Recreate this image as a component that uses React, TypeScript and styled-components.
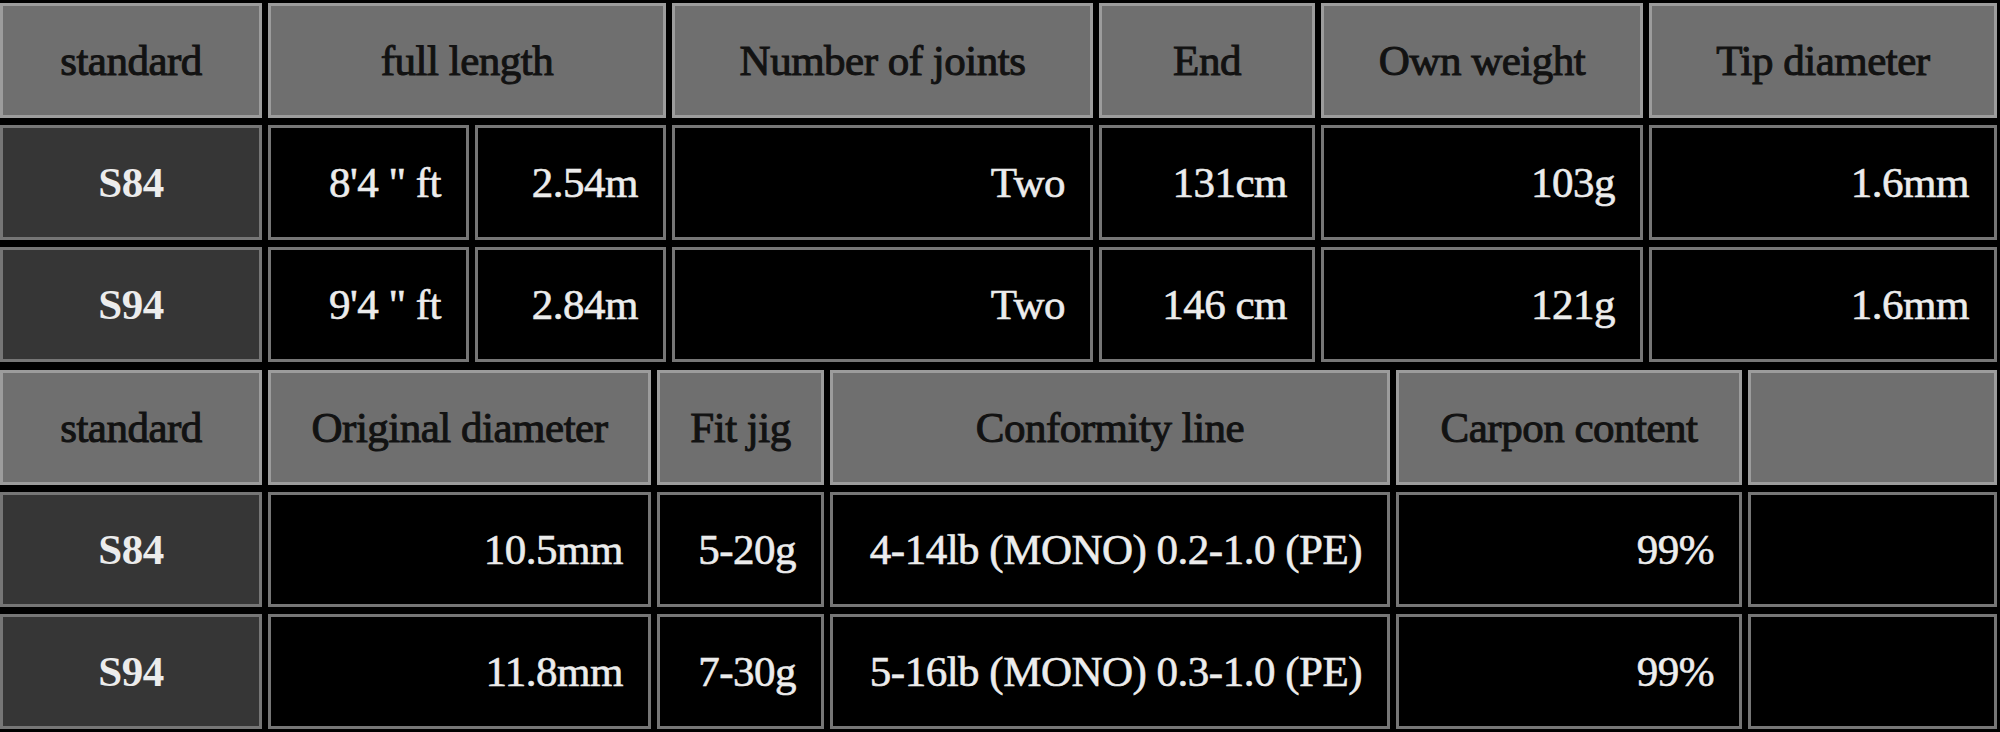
import styled, { createGlobalStyle } from "styled-components";

const GlobalStyle = createGlobalStyle`
  html, body {
    margin: 0;
    padding: 0;
    background: #000;
  }
`;

const serif = `"Liberation Serif", "Times New Roman", serif`;

const Page = styled.main`
  display: flex;
  flex-direction: column;
  gap: 8px;
  width: 2000px;
  height: 732px;
  padding-top: 3px;
  box-sizing: border-box;
  background: #000;
  overflow: hidden;
  font-family: ${serif};
`;

const SpecGrid = styled.section<{ $columns: string }>`
  display: grid;
  grid-template-columns: ${(p) => p.$columns};
  grid-auto-rows: 115px;
  column-gap: 6px;
  row-gap: 7px;
`;

type CellKind = "head" | "label" | "value";

const Cell = styled.div<{ $kind: CellKind; $span?: number }>`
  grid-column: span ${(p) => p.$span ?? 1};
  display: flex;
  align-items: center;
  justify-content: ${(p) => (p.$kind === "value" ? "flex-end" : "center")};
  box-sizing: border-box;
  padding: 0 ${(p) => (p.$kind === "value" ? "25px" : "0")} 0 0;
  border: 3px solid
    ${(p) => (p.$kind === "head" ? "#9c9c9c" : "#767676")};
  background: ${(p) =>
    p.$kind === "head" ? "#6f6f6f" : p.$kind === "label" ? "#363636" : "#000"};
  color: ${(p) => (p.$kind === "head" ? "#121212" : "#ececec")};
  font-family: ${serif};
  font-size: 43px;
  font-weight: ${(p) => (p.$kind === "label" ? 700 : 400)};
  letter-spacing: -0.5px;
  white-space: nowrap;
  -webkit-text-stroke: ${(p) =>
    p.$kind === "head" ? "1px #121212" : p.$kind === "value" ? "0.6px #ececec" : "0"};
`;

type Row = { label: string; values: string[] };

const topColumns = "262px 201px 191px 421px 216px 322px 348px";
const topHeads: { text: string; span?: number }[] = [
  { text: "standard" },
  { text: "full length", span: 2 },
  { text: "Number of joints" },
  { text: "End" },
  { text: "Own weight" },
  { text: "Tip diameter" },
];
const topRows: Row[] = [
  { label: "S84", values: ["8'4 \" ft", "2.54m", "Two", "131cm", "103g", "1.6mm"] },
  { label: "S94", values: ["9'4 \" ft", "2.84m", "Two", "146 cm", "121g", "1.6mm"] },
];

const bottomColumns = "262px 383px 167px 560px 346px 249px";
const bottomHeads: { text: string; span?: number }[] = [
  { text: "standard" },
  { text: "Original diameter" },
  { text: "Fit jig" },
  { text: "Conformity line" },
  { text: "Carpon content" },
  { text: "" },
];
const bottomRows: Row[] = [
  { label: "S84", values: ["10.5mm", "5-20g", "4-14lb (MONO) 0.2-1.0 (PE)", "99%", ""] },
  { label: "S94", values: ["11.8mm", "7-30g", "5-16lb (MONO) 0.3-1.0 (PE)", "99%", ""] },
];

function SpecTable(props: {
  columns: string;
  heads: { text: string; span?: number }[];
  rows: Row[];
}) {
  const { columns, heads, rows } = props;
  return (
    <SpecGrid $columns={columns}>
      {heads.map((h, i) => (
        <Cell key={`h${i}`} $kind="head" $span={h.span}>
          {h.text}
        </Cell>
      ))}
      {rows.map((r) => [
        <Cell key={r.label} $kind="label">
          {r.label}
        </Cell>,
        ...r.values.map((v, i) => (
          <Cell key={`${r.label}-${i}`} $kind="value">
            {v}
          </Cell>
        )),
      ])}
    </SpecGrid>
  );
}

export default function App() {
  return (
    <>
      <GlobalStyle />
      <Page>
        <SpecTable columns={topColumns} heads={topHeads} rows={topRows} />
        <SpecTable columns={bottomColumns} heads={bottomHeads} rows={bottomRows} />
      </Page>
    </>
  );
}
